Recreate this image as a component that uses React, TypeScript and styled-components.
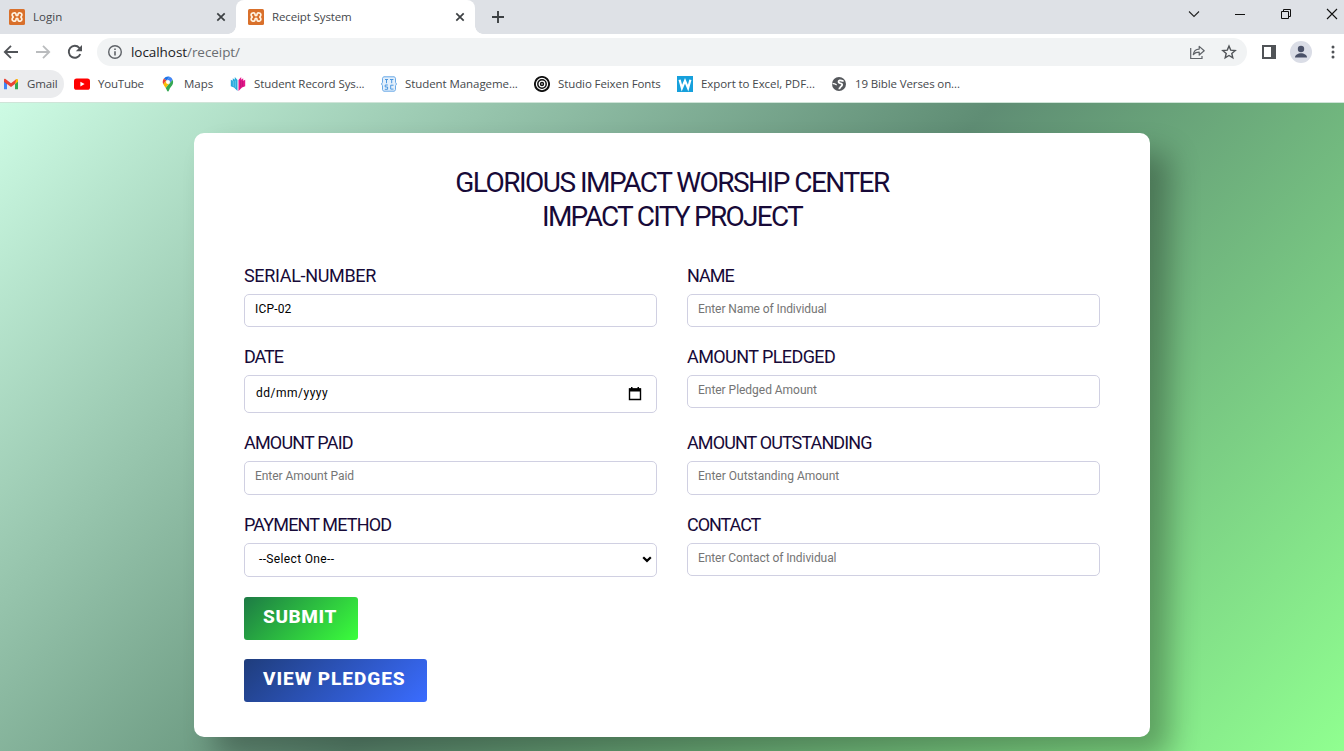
import React from "react";
import styled, { createGlobalStyle } from "styled-components";

const GlobalStyle = createGlobalStyle`
  * { box-sizing: border-box; }
  body { margin: 0; overflow: hidden; background: #fff; }
`;

const chromeFont = `"Open Sans", "Noto Sans", sans-serif`;
const formFont = `Roboto, "Liberation Sans", sans-serif`;

const Window = styled.div`
  width: 1344px;
  height: 751px;
  display: flex;
  flex-direction: column;
  overflow: hidden;
`;

/* ---------- browser chrome ---------- */

const TabStrip = styled.div`
  height: 34px;
  flex: none;
  display: flex;
  background: #dee1e6;
  font-family: ${chromeFont};
`;

const Tab = styled.div<{ $active?: boolean; $width: number }>`
  position: relative;
  width: ${(p) => p.$width}px;
  height: 34px;
  display: flex;
  align-items: center;
  padding: 0 8px 0 ${(p) => (p.$active ? 12 : 9)}px;
  background: ${(p) => (p.$active ? "#fff" : "transparent")};
  border-radius: 8px 8px 0 0;
  &::before,
  &::after {
    content: "";
    display: ${(p) => (p.$active ? "block" : "none")};
    position: absolute;
    bottom: 0;
    width: 8px;
    height: 8px;
  }
  &::before {
    left: -8px;
    background: radial-gradient(circle at 0 0, transparent 7.5px, #fff 8px);
  }
  &::after {
    right: -8px;
    background: radial-gradient(circle at 100% 0, transparent 7.5px, #fff 8px);
  }
`;

const TabTitle = styled.span<{ $ls: number }>`
  flex: 1;
  margin-left: 8px;
  font-size: 11.5px;
  line-height: 16px;
  letter-spacing: ${(p) => p.$ls}px;
  color: #45484c;
  white-space: nowrap;
`;

const NewTab = styled.div`
  width: 46px;
  display: flex;
  align-items: center;
  justify-content: center;
`;

const WindowControls = styled.div`
  margin-left: auto;
  display: flex;
  align-items: center;
  padding: 0 6px 6px 0;
`;

const ControlSlot = styled.div`
  width: 46px;
  height: 28px;
  display: flex;
  align-items: center;
  justify-content: flex-end;
`;

const Toolbar = styled.div`
  height: 36px;
  flex: none;
  display: flex;
  align-items: center;
  background: #fff;
  padding-left: 2px;
`;

const NavSlot = styled.div<{ $w: number }>`
  width: ${(p) => p.$w}px;
  height: 18px;
  display: flex;
`;

const AddressBar = styled.div`
  width: 1150px;
  height: 28px;
  display: flex;
  align-items: center;
  padding: 0 10px;
  border-radius: 14px;
  background: #f1f3f4;
`;

const Url = styled.span`
  flex: 1;
  margin-left: 8px;
  font: 13.5px/20px ${chromeFont};
  letter-spacing: -0.06px;
  color: #6a6d71;
  b { font-weight: 400; color: #202124; }
`;

const AddressActions = styled.div`
  display: flex;
  gap: 15px;
`;

const ToolbarEnd = styled.div`
  display: flex;
  align-items: center;
  margin-left: 15px;
`;

const Avatar = styled.div`
  width: 22px;
  height: 22px;
  margin: 0 19px 0 13px;
  border-radius: 50%;
  background: #dadde6;
`;

const Bookmarks = styled.div`
  height: 33px;
  flex: none;
  display: flex;
  background: #fff;
  border-bottom: 1px solid #cfe4d8;
`;

const Bookmark = styled.div<{ $w: number; $hover?: boolean }>`
  width: ${(p) => p.$w}px;
  height: 28px;
  display: flex;
  align-items: center;
  gap: 8px;
  padding-left: ${(p) => (p.$hover ? 3 : 0)}px;
  margin-right: ${(p) => (p.$hover ? 10 : 0)}px;
  border-radius: 0 14px 14px 0;
  background: ${(p) => (p.$hover ? "#ebecee" : "transparent")};
  svg { flex: none; }
`;

const BookmarkLabel = styled.span<{ $ls: number }>`
  font: 11.5px/16px ${chromeFont};
  letter-spacing: ${(p) => p.$ls}px;
  color: #45484c;
  white-space: nowrap;
`;

/* ---------- page ---------- */

const Page = styled.main`
  flex: 1;
  padding: 30px 194px 0;
  background: linear-gradient(135deg, #cdfbe4, #5f8d74 50%, #90ff90);
`;

const Card = styled.section`
  height: 604px;
  padding: 33px 50px 0;
  border-radius: 10px;
  background: #fff;
  box-shadow: 20px 20px 30px rgba(0, 0, 0, 0.3);
  font-family: ${formFont};
`;

const Title = styled.h1`
  margin: 0 0 32px;
  text-align: center;
  font: 400 28px/34px ${formFont};
  color: #170a38;
`;

const TitleLine = styled.span<{ $ls: number }>`
  display: block;
  letter-spacing: ${(p) => p.$ls}px;
`;

const Grid = styled.div`
  display: grid;
  grid-template-columns: 413px 413px;
  grid-template-rows: 61px 66px 62px 62px;
  gap: 20px 30px;
`;

const Field = styled.div`
  display: flex;
  flex-direction: column;
`;

const Label = styled.label<{ $ls: number }>`
  height: 28px;
  font: 400 18px/19px ${formFont};
  letter-spacing: ${(p) => p.$ls}px;
  color: #170a38;
  white-space: nowrap;
`;

const Control = styled.div<{ $h: number; $dim?: boolean; $pad: number; $ls: number; $picker: boolean }>`
  height: ${(p) => p.$h}px;
  display: flex;
  align-items: center;
  justify-content: space-between;
  padding: 0 ${(p) => (p.$pad === 14 ? 4 : 14)}px ${(p) => (p.$picker ? 3 : 4)}px ${(p) => p.$pad}px;
  border: 1px solid #d0d0e2;
  border-radius: 5px;
  font-size: 12px;
  line-height: 14px;
  letter-spacing: ${(p) => p.$ls}px;
  color: ${(p) => (p.$dim ? "#757575" : "#000")};
  svg { position: relative; top: 1px; }
`;

const Actions = styled.div`
  display: flex;
  flex-direction: column;
  align-items: flex-start;
  gap: 19px;
  margin-top: 20px;
`;

const Button = styled.button<{ $w: number; $from: string; $to: string; $ls: number }>`
  width: ${(p) => p.$w}px;
  height: 43px;
  padding: 0 0 3px 19px;
  border: 0;
  border-radius: 3px;
  text-align: left;
  background: linear-gradient(135deg, ${(p) => p.$from}, ${(p) => p.$to});
  font: 800 19px/24px ${formFont};
  letter-spacing: ${(p) => p.$ls}px;
  color: #fff;
  white-space: nowrap;
`;

/* ---------- icons ---------- */

const XamppIcon = () => (
  <svg width="16" height="16" viewBox="0 0 16 16">
    <rect width="16" height="16" rx="1.5" fill="#d9702b" />
    <path d="M4 4.2c2-1 3 0 3 1.4 0 .7.5 1 1 1s1-.3 1-1c0-1.4 1-2.4 3-1.4 1.3.8 1 2.300.2 3.100-.5.5-.5.9 0 1.400.8.8 1.100 2.300-.2 3.100-2 1-3 0-3-1.400 0-.7-.5-1-1-1s-1 .3-1 1c0 1.400-1 2.400-3 1.400-1.300-.8-1-2.300-.2-3.100.5-.5.5-.9 0-1.400-.8-.8-1.100-2.300.2-3.100z" fill="none" stroke="#fff3e2" strokeWidth="1.7" />
  </svg>
);

const CloseIcon = () => (
  <svg width="14" height="14" viewBox="0 0 14 14">
    <path d="M3.300 3.300l7.400 7.400M10.700 3.300l-7.400 7.400" stroke="#3c4043" strokeWidth="1.700" />
  </svg>
);

const PlusIcon = () => (
  <svg width="14" height="14" viewBox="0 0 14 14">
    <path d="M7 1v12M1 7h12" stroke="#3c4043" strokeWidth="1.900" />
  </svg>
);

const ArrowIcon = ({ forward }: { forward?: boolean }) => (
  <svg width="18" height="18" viewBox="0 0 18 18">
    <path
      d={forward ? "M2 9h13M9 2.800L15.200 9 9 15.200" : "M16 9H3M9 2.800L2.800 9 9 15.200"}
      fill="none"
      stroke={forward ? "#babcbe" : "#505357"}
      strokeWidth="1.800"
    />
  </svg>
);

const ReloadIcon = () => (
  <svg width="18" height="18" viewBox="0 0 18 18">
    <path d="M14.300 11.200A6 6 0 1 1 13.300 4.800L14.500 6" fill="none" stroke="#505357" strokeWidth="1.900" />
    <path d="M16 2v6.200H9.800z" fill="#505357" />
  </svg>
);

const InfoIcon = () => (
  <svg width="16" height="16" viewBox="0 0 16 16">
    <circle cx="8" cy="8" r="6.300" fill="none" stroke="#5f6368" strokeWidth="1.400" />
    <path d="M8 7.200v4.200M8 4.500v1.600" stroke="#5f6368" strokeWidth="1.600" />
  </svg>
);

const ShareIcon = () => (
  <svg width="17" height="16" viewBox="0 0 17 16">
    <path d="M1.700 4v10.500H13V12" fill="none" stroke="#5f6368" strokeWidth="1.200" />
    <path d="M4.300 10.500C4.800 7 7 5.200 10.200 5.100V2.400l5 4.400-5 4.200V8.200C7.500 8.200 5.700 9 4.300 10.500z" fill="none" stroke="#5f6368" strokeWidth="1.200" strokeLinejoin="round" />
  </svg>
);

const StarIcon = () => (
  <svg width="16" height="16" viewBox="0 0 16 16">
    <path d="M8 2l1.700 4.100 4.500.4-3.400 2.900 1 4.400L8 11.500l-3.800 2.300 1-4.400L1.800 6.500l4.500-.4z" fill="none" stroke="#505357" strokeWidth="1.400" />
  </svg>
);

const SidePanelIcon = () => (
  <svg width="15" height="14" viewBox="0 0 15 14">
    <path d="M0 0h14v14H0zM2 2v10h7V2z" fill="#505357" fillRule="evenodd" />
  </svg>
);

const PersonIcon = () => (
  <svg width="22" height="22" viewBox="0 0 22 22" display="block">
    <circle cx="11" cy="8" r="3.200" fill="#4a5168" />
    <path d="M5 16.500c0-2.600 3-4.300 6-4.300s6 1.700 6 4.300z" fill="#4a5168" />
  </svg>
);

const MenuIcon = () => (
  <svg width="4" height="14" viewBox="0 0 4 14">
    <circle cx="2" cy="2" r="1.500" fill="#505357" />
    <circle cx="2" cy="7" r="1.500" fill="#505357" />
    <circle cx="2" cy="12" r="1.500" fill="#505357" />
  </svg>
);

const GmailIcon = () => (
  <svg width="16" height="16" viewBox="0 0 16 16">
    <path d="M1 4.500v8.800h3V7.500z" fill="#4285f4" />
    <path d="M12 7.500v5.800h3V4.500z" fill="#34a853" />
    <path d="M1 3.500v2.200l3 2.400V4.600z" fill="#c5221f" />
    <path d="M12 4.600v3.500l3-2.400V4c0-1.200-1.300-1.300-2-.8z" fill="#fbbc04" />
    <path d="M2.500 3L8 7.200 13.200 3.300 12 7.900l-4 3-4-3L1 5.500V4c0-1 .8-1.400 1.500-1z" fill="#ea4335" />
  </svg>
);

const YouTubeIcon = () => (
  <svg width="16" height="16" viewBox="0 0 16 16">
    <rect x="0" y="2.400" width="16" height="11.400" rx="2.600" fill="#f00" />
    <path d="M6.400 5.700v4.800L10.600 8.100z" fill="#fff" />
  </svg>
);

const MapsIcon = () => (
  <svg width="16" height="16" viewBox="0 0 16 16">
    <path d="M8 .5a5.300 5.300 0 0 0-4.100 2L6.400 4.600 9.600.8C9 .6 8.500.5 8 .5z" fill="#1a73e8" />
    <path d="M3.900 2.500C2.400 4.400 2.500 6.600 3.300 8.200L6.400 4.600z" fill="#ea4335" />
    <path d="M9.600.8L6.400 4.600 9.600 7.200l3-3.500C12 2.300 11 1.200 9.600.8z" fill="#4285f4" />
    <path d="M6.400 4.600L3.300 8.200c.6 1.300 1.500 2.300 2.400 3.700L9.600 7.200z" fill="#fbbc04" />
    <path d="M12.600 3.700L5.700 11.900C6.900 13.700 7 15.500 8 15.500c1.200 0 .9-2.500 3.200-5 1.900-2.200 2.500-4.300 1.400-6.800z" fill="#34a853" />
    <circle cx="8" cy="5.900" r="2" fill="#fff" />
  </svg>
);

const BookIcon = () => (
  <svg width="16" height="16" viewBox="0 0 16 16">
    <path d="M.8 3.800l2 1V2.200l2 1.600V1l2.700 3v11L4 11.600.8 10.300z" fill="#27a9dc" />
    <path d="M15.200 3.800l-2 1V2.200l-2 1.600V1L8.500 4v11l3.500-3.400 3.200-1.300z" fill="#e5168a" />
    <path d="M3.300 5v5.400M5.300 4.500v7.200" stroke="#8fd8f2" strokeWidth=".6" />
    <path d="M12.700 5v5.400M10.700 4.500v7.200" stroke="#a80f6a" strokeWidth=".6" />
  </svg>
);

const ManagementIcon = () => (
  <svg width="16" height="16" viewBox="0 0 16 16">
    <path d="M2.500.8h11l1 1.500v4L15.500 8l-1 1.700v4l-1 1.500h-11l-1-1.500v-4L.5 8l1-1.700v-4z" fill="#e3effb" stroke="#6aa9e6" strokeWidth="1" />
    <path d="M4 3.500h3M5.500 3.500v3.700M9 3.500h3.400M10.700 3.500v3.700M6.800 9H4.200v2h2.400v2.300H3.800M12.500 9.200H9.700v3.900h2.800" fill="none" stroke="#4a97e0" strokeWidth="1" />
  </svg>
);

const RingsIcon = () => (
  <svg width="16" height="16" viewBox="0 0 16 16" fill="none" stroke="#111">
    <circle cx="8" cy="8" r="7.100" strokeWidth="1.900" />
    <circle cx="8" cy="8" r="4.200" strokeWidth="1.500" />
    <circle cx="8" cy="8" r="1.500" strokeWidth="1.400" />
  </svg>
);

const WIcon = () => (
  <svg width="16" height="16" viewBox="0 0 16 16">
    <rect width="16" height="16" fill="#16a0dc" />
    <path d="M2.600 3.800l2.300 8.400L8 4.800l3.100 7.400 2.300-8.400" fill="none" stroke="#fff" strokeWidth="2.200" />
  </svg>
);

const GlobeIcon = () => (
  <svg width="16" height="16" viewBox="0 0 16 16">
    <circle cx="8" cy="8" r="7" fill="#55585c" />
    <path d="M12.600 4.800C11 5.200 10.200 3.900 8.600 4.400 7 5 7.200 6.700 8.900 7.100c1.800.3 2.700 1 2.100 2.300-.5 1.200-1.500 1-1.800 2-.2.700-.8 1.200-1.600 1.300" fill="none" stroke="#fff" strokeWidth="1.800" />
    <path d="M1.500 7.700c1.600-.2 2.900.4 4.200 1.300" fill="none" stroke="#fff" strokeWidth="1.100" />
  </svg>
);

const CalendarIcon = () => (
  <svg width="14" height="15" viewBox="0 0 14 15">
    <path d="M1.500 3h11v10.500h-11z" fill="none" stroke="#000" strokeWidth="1.400" />
    <path d="M1 2.400h12v3H1zM3 1h1.500v2H3zM9.500 1H11v2H9.500z" fill="#000" />
  </svg>
);

const ChevronIcon = () => (
  <svg width="10" height="7" viewBox="0 0 10 7">
    <path d="M1.200 1.200L5 4.900l3.800-3.700" fill="none" stroke="#000" strokeWidth="2.200" />
  </svg>
);

/* ---------- data ---------- */

const bookmarks = [
  { label: "Gmail", w: 64, ls: -0.15, Icon: GmailIcon, hover: true },
  { label: "YouTube", w: 86, ls: -0.2, Icon: YouTubeIcon },
  { label: "Maps", w: 70, ls: 0, Icon: MapsIcon },
  { label: "Student Record Sys...", w: 151, ls: -0.09, Icon: BookIcon },
  { label: "Student Manageme...", w: 153, ls: -0.07, Icon: ManagementIcon },
  { label: "Studio Feixen Fonts", w: 143, ls: -0.1, Icon: RingsIcon },
  { label: "Export to Excel, PDF...", w: 154, ls: -0.08, Icon: WIcon },
  { label: "19 Bible Verses on...", w: 140, ls: -0.12, Icon: GlobeIcon },
];

const fields = [
  { label: "SERIAL-NUMBER", ls: -0.33, text: "ICP-02", tls: 0.18, h: 33, pad: 10 },
  { label: "NAME", ls: -1, text: "Enter Name of Individual", tls: -0.09, h: 33, pad: 10, dim: true },
  { label: "DATE", ls: -1.1, text: "dd/mm/yyyy", tls: 0.5, h: 38, pad: 11, icon: <CalendarIcon /> },
  { label: "AMOUNT PLEDGED", ls: -0.58, text: "Enter Pledged Amount", tls: -0.03, h: 33, pad: 10, dim: true },
  { label: "AMOUNT PAID", ls: -0.8, text: "Enter Amount Paid", tls: -0.05, h: 34, pad: 10, dim: true },
  { label: "AMOUNT OUTSTANDING", ls: -0.9, text: "Enter Outstanding Amount", tls: 0, h: 34, pad: 10, dim: true },
  { label: "PAYMENT METHOD", ls: -0.86, text: "--Select One--", tls: 0.35, h: 34, pad: 14, icon: <ChevronIcon /> },
  { label: "CONTACT", ls: -1.05, text: "Enter Contact of Individual", tls: -0.09, h: 33, pad: 10, dim: true },
];

export default function App() {
  return (
    <Window>
      <GlobalStyle />
      <TabStrip>
        <Tab $width={236}>
          <XamppIcon />
          <TabTitle $ls={0.05}>Login</TabTitle>
          <CloseIcon />
        </Tab>
        <Tab $active $width={239}>
          <XamppIcon />
          <TabTitle $ls={-0.12}>Receipt System</TabTitle>
          <CloseIcon />
        </Tab>
        <NewTab>
          <PlusIcon />
        </NewTab>
        <WindowControls>
          <ControlSlot>
            <svg width="12" height="12" viewBox="0 0 12 12"><path d="M1 3.500l5 5 5-5" fill="none" stroke="#222" strokeWidth="1.100" /></svg>
          </ControlSlot>
          <ControlSlot>
            <svg width="12" height="12" viewBox="0 0 12 12"><path d="M1 6.500h10" stroke="#111" /></svg>
          </ControlSlot>
          <ControlSlot>
            <svg width="12" height="12" viewBox="0 0 12 12"><path d="M1.500 3.500h7v7h-7zM3.500 3.500v-2h7v7h-2" fill="none" stroke="#111" /></svg>
          </ControlSlot>
          <ControlSlot>
            <svg width="12" height="12" viewBox="0 0 12 12"><path d="M1 1l10 10M11 1L1 11" stroke="#111" strokeWidth="1.100" /></svg>
          </ControlSlot>
        </WindowControls>
      </TabStrip>
      <Toolbar>
        <NavSlot $w={32}><ArrowIcon /></NavSlot>
        <NavSlot $w={32}><ArrowIcon forward /></NavSlot>
        <NavSlot $w={31}><ReloadIcon /></NavSlot>
        <AddressBar>
          <InfoIcon />
          <Url><b>localhost</b>/receipt/</Url>
          <AddressActions>
            <ShareIcon />
            <StarIcon />
          </AddressActions>
        </AddressBar>
        <ToolbarEnd>
          <SidePanelIcon />
          <Avatar><PersonIcon /></Avatar>
          <MenuIcon />
        </ToolbarEnd>
      </Toolbar>
      <Bookmarks>
        {bookmarks.map(({ label, w, ls, Icon, hover }) => (
          <Bookmark key={label} $w={w} $hover={hover}>
            <Icon />
            <BookmarkLabel $ls={ls}>{label}</BookmarkLabel>
          </Bookmark>
        ))}
      </Bookmarks>
      <Page>
        <Card>
          <Title>
            <TitleLine $ls={-1.52}>GLORIOUS IMPACT WORSHIP CENTER</TitleLine>
            <TitleLine $ls={-1.75}>IMPACT CITY PROJECT</TitleLine>
          </Title>
          <Grid>
            {fields.map((f) => (
              <Field key={f.label}>
                <Label $ls={f.ls}>{f.label}</Label>
                <Control $h={f.h} $pad={f.pad} $dim={f.dim} $ls={f.tls} $picker={!!f.icon}>
                  <span>{f.text}</span>
                  {f.icon}
                </Control>
              </Field>
            ))}
          </Grid>
          <Actions>
            <Button $w={114} $from="#1d7a45" $to="#3bff3b" $ls={0.6}>SUBMIT</Button>
            <Button $w={183} $from="#1f3d7c" $to="#3a6cff" $ls={0.95}>VIEW PLEDGES</Button>
          </Actions>
        </Card>
      </Page>
    </Window>
  );
}
